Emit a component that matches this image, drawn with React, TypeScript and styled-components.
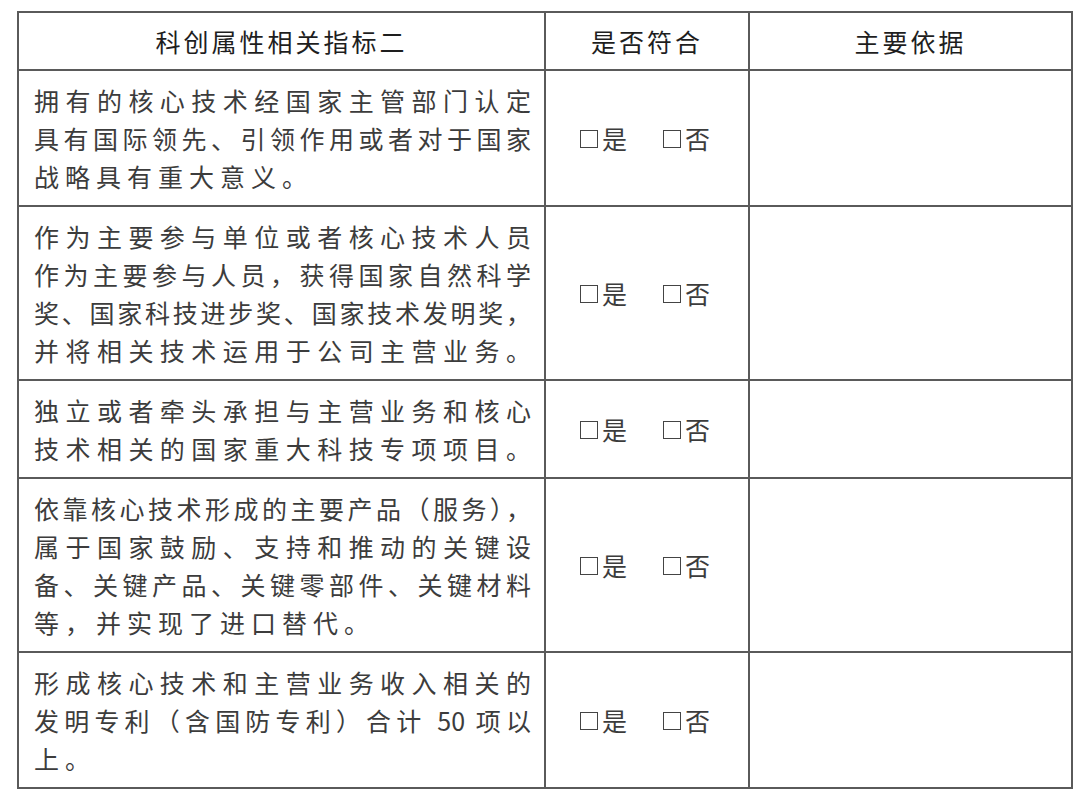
import { createGlobalStyle } from "styled-components";
import styled from "styled-components";

const GlobalStyle = createGlobalStyle`
    html, body {
        margin: 0;
        padding: 0;
        background: #ffffff;
    }
    body {
        font-family: "Noto Sans CJK SC", "Liberation Serif", sans-serif;
    }
`

const Page = styled.div`
    width: 1080px;
    height: 798px;
    padding: 11px 0 0 17px;
    box-sizing: border-box;
    background: #fff;
`
const Table = styled.table`
    border-collapse: collapse;
    table-layout: fixed;
    width: 1048px;
`
const HeadCell = styled.th<{ $w: number }>`
    width: ${(p) => p.$w}px;
    height: 56px;
    padding: 0;
    border: 2px solid #5a5a5a;
    font-weight: 400;
    font-size: 25px;
    letter-spacing: 3px;
    color: #1e1e1e;
    text-align: center;
    vertical-align: middle;
`
const TextCell = styled.td`
    border: 2px solid #5a5a5a;
    padding: 10px 13px 10px 15px;
    font-size: 25px;
    line-height: 38px;
    color: #3c3c3c;
    white-space: nowrap;
    vertical-align: middle;
`
const Line = styled.div<{ $last: boolean }>`
    text-align: justify;
    text-align-last: ${(p) => (p.$last ? "left" : "justify")};
    text-justify: inter-character;
    letter-spacing: ${(p) => (p.$last ? "6px" : "0")};
`
const CheckCell = styled.td`
    border: 2px solid #5a5a5a;
    padding: 0;
    vertical-align: middle;
`
const Choices = styled.div`
    display: flex;
    align-items: center;
    justify-content: center;
    gap: 36px;
    padding-right: 4px;
`
const Choice = styled.span`
    display: flex;
    align-items: center;
    gap: 4px;
    font-size: 25px;
    color: #3c3c3c;
`
const Box = styled.span`
    width: 18px;
    height: 18px;
    border: 1.5px solid #444;
    box-sizing: border-box;
    display: inline-block;
    margin-top: 2px;
`
const EmptyCell = styled.td`
    border: 2px solid #5a5a5a;
`

const rows: string[][] = [
    ["拥有的核心技术经国家主管部门认定", "具有国际领先、引领作用或者对于国家", "战略具有重大意义。"],
    ["作为主要参与单位或者核心技术人员", "作为主要参与人员，获得国家自然科学", "奖、国家科技进步奖、国家技术发明奖，", "并将相关技术运用于公司主营业务。"],
    ["独立或者牵头承担与主营业务和核心", "技术相关的国家重大科技专项项目。"],
    ["依靠核心技术形成的主要产品（服务），", "属于国家鼓励、支持和推动的关键设", "备、关键产品、关键零部件、关键材料", "等，并实现了进口替代。"],
    ["形成核心技术和主营业务收入相关的", "发明专利（含国防专利）合计 50 项以", "上。"],
]

function App() {
    return (
        <Page>
            <GlobalStyle />
            <Table>
                <thead>
                    <tr>
                        <HeadCell $w={525}>科创属性相关指标二</HeadCell>
                        <HeadCell $w={202}>是否符合</HeadCell>
                        <HeadCell $w={321}>主要依据</HeadCell>
                    </tr>
                </thead>
                <tbody>
                    {rows.map((lines, i) => (
                        <tr key={i}>
                            <TextCell>
                                {lines.map((l, j) => (
                                    <Line key={j} $last={j === lines.length - 1 && (i === 0 || i === 3 || i === 4)}>{l}</Line>
                                ))}
                            </TextCell>
                            <CheckCell>
                                <Choices>
                                    <Choice><Box />是</Choice>
                                    <Choice><Box />否</Choice>
                                </Choices>
                            </CheckCell>
                            <EmptyCell />
                        </tr>
                    ))}
                </tbody>
            </Table>
        </Page>
    )
}

export default App;
